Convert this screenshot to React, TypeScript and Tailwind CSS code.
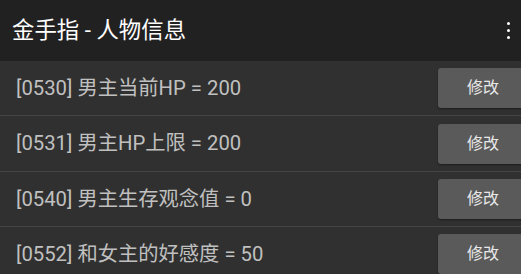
import React from 'react'

const rows = [
  { id: '0530', label: '男主当前HP', value: '200' },
  { id: '0531', label: '男主HP上限', value: '200' },
  { id: '0540', label: '男主生存观念值', value: '0' },
  { id: '0552', label: '和女主的好感度', value: '50' },
]

export default function App() {
  return (
    <div
      className="w-[521px] h-[274px] overflow-hidden bg-[#303030]"
      style={{ fontFamily: 'Roboto, "Noto Sans CJK SC", sans-serif' }}
    >
      <div className="h-[61px] bg-[#212121] flex items-center justify-between pl-3 pr-[11px]">
        <h1 className="text-[22.4px] text-white leading-none">金手指 - 人物信息</h1>
        <div className="flex flex-col items-center gap-[3.5px]">
          <span className="w-[3.5px] h-[3.5px] rounded-full bg-white" />
          <span className="w-[3.5px] h-[3.5px] rounded-full bg-white" />
          <span className="w-[3.5px] h-[3.5px] rounded-full bg-white" />
        </div>
      </div>

      {rows.map((r) => (
        <div
          key={r.id}
          className="h-[55.4px] flex items-center justify-between pl-4 border-b-[1.5px] border-[#454545]"
        >
          <span className="text-[20.3px] text-[#c0c0c0] leading-none">
            [{r.id}] {r.label} = {r.value}
          </span>
          <button className="w-[90px] h-[40px] shrink-0 -mr-[7px] rounded-[3px] bg-[#5a5a5a] text-[16px] text-[#e8e8e8] shadow-[0_1px_2px_rgba(0,0,0,0.4)]">
            修改
          </button>
        </div>
      ))}
    </div>
  )
}
